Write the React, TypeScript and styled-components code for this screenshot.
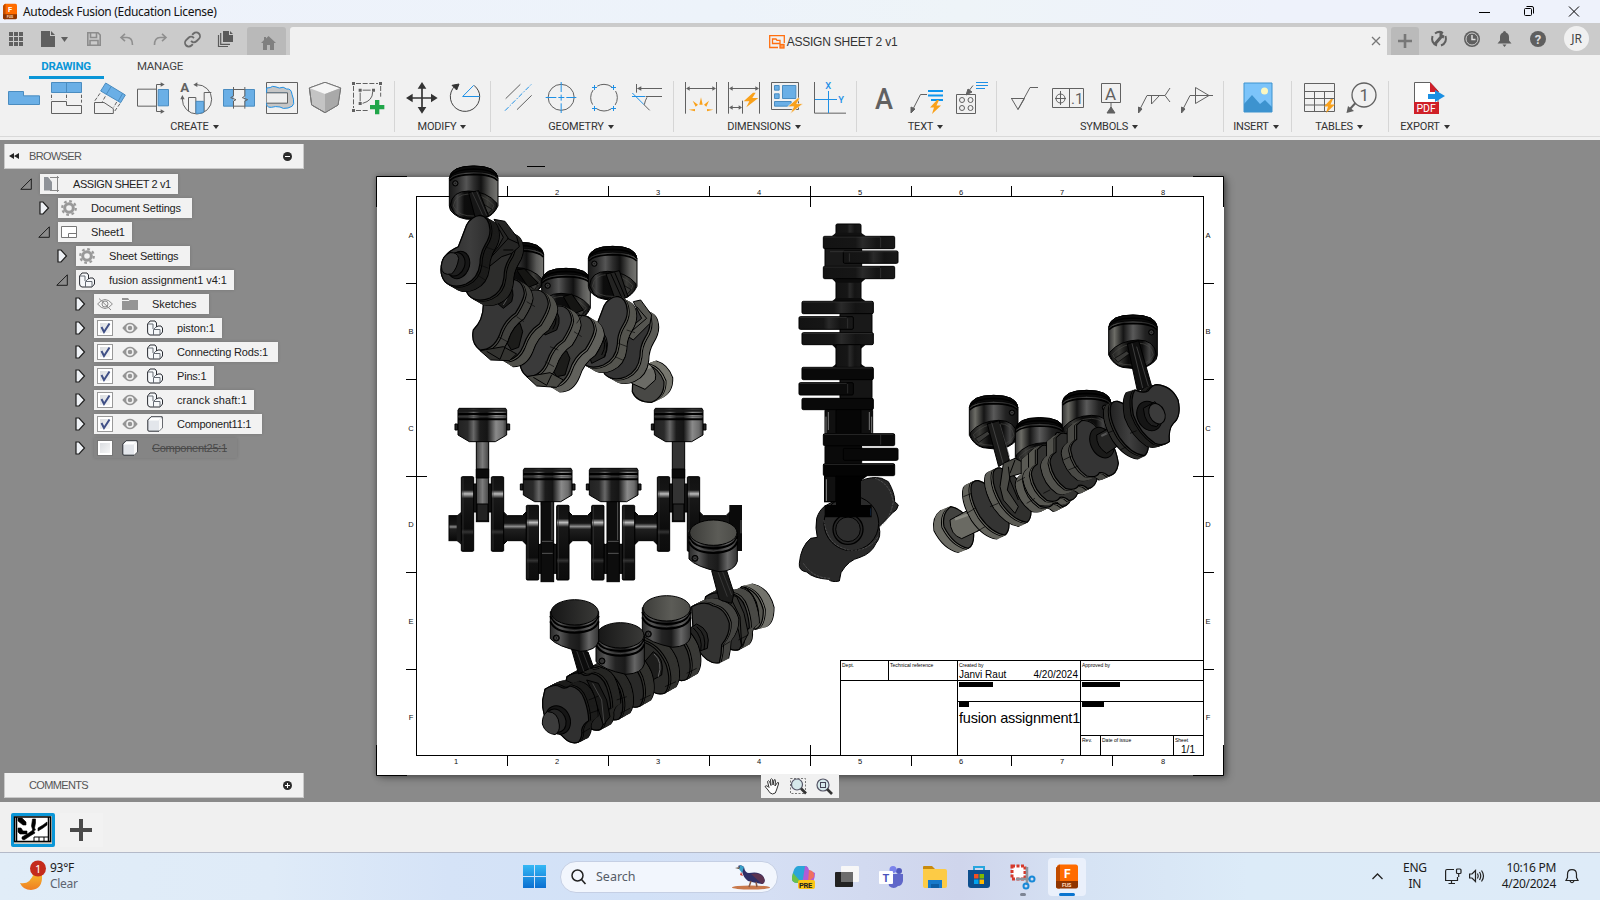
import React from "react";
import styled, { createGlobalStyle } from "styled-components";

const Global = createGlobalStyle`
  * { box-sizing: border-box; }
  html, body { margin: 0; padding: 0; }
  body { width: 1600px; height: 900px; overflow: hidden; font-family: "Liberation Sans", Arial, sans-serif; }
  svg { display: block; flex: none; overflow: visible; }
`;

const Screen = styled.div`
  width: 1600px;
  height: 900px;
  display: flex;
  flex-direction: column;
  background: #f0f0f0;
`;

/* ---------- window title bar ---------- */
const TitleBar = styled.header`
  height: 23px;
  flex: none;
  display: flex;
  align-items: center;
  padding-left: 3px;
  background: linear-gradient(90deg, #eef2fb 0%, #edf3fa 45%, #eef4f8 60%, #eef2fb 80%);
`;
const WindowTitle = styled.span`
  flex: 1;
  margin-left: 6px;
  font: 12px "Noto Sans", "Open Sans", sans-serif;
  letter-spacing: -0.32px;
  color: #111;
`;
const WindowButtons = styled.div`
  display: flex;
  padding-right: 4px;
  svg { width: 45px; height: 22px; }
`;

/* ---------- document tabs ---------- */
const TabBar = styled.nav`
  height: 32px;
  flex: none;
  display: flex;
  align-items: flex-end;
  background: #cbcbcb;
`;
const QuickCell = styled.div<{ $w?: number; $shift?: boolean }>`
  width: ${(p) => p.$w ?? 33}px;
  height: 32px;
  display: flex;
  align-items: center;
  justify-content: center;
  gap: 6px;
  padding-right: ${(p) => (p.$shift ? 2 : 0)}px;
`;
const HomeTab = styled.div`
  width: 39px;
  height: 28px;
  margin: 0 4px 0 5px;
  display: flex;
  align-items: center;
  justify-content: center;
  padding: 4px 0 0 3px;
  border-radius: 3px 3px 0 0;
  background: #b9b9b9;
`;
const DocTab = styled.div`
  width: 1097px;
  height: 28px;
  display: flex;
  align-items: center;
  justify-content: center;
  position: relative;
  gap: 2px;
  padding: 1px 11px 0 0;
  border-radius: 3px 3px 0 0;
  background: #f1f1f1;
  font-size: 12px;
  letter-spacing: -0.22px;
  color: #333;
`;
const CloseTab = styled.div`
  position: absolute;
  right: 6px;
  top: 9px;
`;
const PlusTab = styled.div`
  width: 28px;
  height: 28px;
  margin: 0 4px;
  display: flex;
  align-items: center;
  justify-content: center;
  border-radius: 3px 3px 0 0;
  background: #bababa;
`;
const Avatar = styled.div`
  width: 25px;
  height: 25px;
  margin: 0 0 4px 9px;
  border-radius: 50%;
  background: #f0f0f0;
  color: #444;
  font: 12px/25px "Noto Sans", sans-serif;
  text-align: center;
`;

/* ---------- ribbon ---------- */
const Ribbon = styled.section`
  height: 85px;
  flex: none;
  background: #f1f1f1;
  border-bottom: 3px solid #f1f1f1;
  display: flex;
  flex-direction: column;
  box-shadow: inset 0 -1px 0 #d9d9d9;
`;
const RibbonTabs = styled.div`
  display: flex;
  height: 24px;
  gap: 19px;
  padding-left: 29px;
`;
const RibbonTab = styled.div<{ $active?: boolean }>`
  width: 75px;
  height: 24px;
  padding-right: 1px;
  text-align: center;
  font: ${(p) => (p.$active ? 700 : 400)} 11.5px/22px Roboto, sans-serif;
  letter-spacing: -0.3px;
  color: ${(p) => (p.$active ? "#0a96d7" : "#444")};
  border-bottom: ${(p) => (p.$active ? "3px solid #0a96d7" : "0")};
`;
const Groups = styled.div`
  display: flex;
  padding-top: 2px;
`;
const Group = styled.div<{ $w: number; $nudge?: number }>`
  width: ${(p) => p.$w}px;
  height: 51px;
  padding: 1px 0 0 0;
  display: flex;
  flex-direction: column;
  align-items: center;
  border-right: 1px solid #d6d6d6;
  &:last-child { border-right: 0; }
  ${(p) => (p.$nudge && p.$nudge > 0 ? `padding-left: ${p.$nudge * 2}px;` : "")}
  ${(p) => (p.$nudge && p.$nudge < 0 ? `padding-right: ${-p.$nudge * 2}px;` : "")}
`;
const Tools = styled.div`
  display: flex;
  gap: 11px;
`;
const GroupLabel = styled.div`
  display: flex;
  align-items: center;
  gap: 4px;
  height: 14px;
  margin-top: 6px;
  padding-right: 3px;
  font: 11px/14px Roboto, sans-serif;
  letter-spacing: -0.2px;
  color: #333;
  &::after {
    content: "";
    border: 3px solid transparent;
    border-top: 4px solid #333;
    border-bottom: 0;
  }
`;

/* ---------- work area ---------- */
const Workspace = styled.main`
  position: relative;
  height: 662px;
  flex: none;
  background: #8a8a8a;
`;
const SideColumn = styled.aside`
  width: 308px;
  height: 662px;
  padding: 4px;
  display: flex;
  flex-direction: column;
`;
const PanelHeader = styled.div`
  height: 25px;
  flex: none;
  display: flex;
  align-items: center;
  justify-content: space-between;
  padding: 0 11px 0 4px;
  background: #f2f2f2;
  border: 1px solid #c9c9c9;
  border-width: 0 1px 1px 1px;
  font-size: 11px;
  letter-spacing: -0.65px;
  color: #555;
`;
const PanelTitle = styled.div`
  display: flex;
  align-items: center;
  gap: 10px;
`;
const Blank = styled.i`
  width: 10px;
`;
const Tree = styled.div`
  flex: 1;
  display: flex;
  flex-direction: column;
  gap: 4px;
  padding-top: 5px;
`;
const TreeRow = styled.div<{ $x: number }>`
  display: flex;
  height: 20px;
  padding-left: ${(p) => p.$x - 24}px;
`;
const ArrowCell = styled.div<{ $open?: boolean }>`
  width: 20px;
  display: flex;
  align-items: center;
  padding-left: ${(p) => (p.$open ? 0 : 1)}px;
`;
const TreeBox = styled.div<{ $w: number; $off?: boolean }>`
  width: ${(p) => p.$w}px;
  height: 20px;
  display: flex;
  align-items: center;
  gap: 9px;
  padding-left: 3px;
  background: ${(p) => (p.$off ? "#858585" : "#f2f2f2")};
  box-shadow: 0 0 3px rgba(0, 0, 0, 0.15);
`;
const TreeText = styled.span<{ $ls: number; $off?: boolean }>`
  margin-left: 5px;
  font-size: 11px;
  white-space: nowrap;
  letter-spacing: ${(p) => p.$ls}px;
  color: ${(p) => (p.$off ? "#4a4a4a" : "#222")};
  text-decoration: ${(p) => (p.$off ? "line-through" : "none")};
`;
const Check = styled.div<{ $off?: boolean }>`
  width: 16px;
  height: 16px;
  border: 1px solid ${(p) => (p.$off ? "#777" : "#999")};
  background: linear-gradient(135deg, #d5d8dc, #fbfbfb);
  box-shadow: inset 0 0 0 2px #fff;
`;
const Sheet = styled.div`
  position: absolute;
  left: 377px;
  top: 37px;
  width: 847px;
  height: 598px;
  background: #fff;
  box-shadow: 0 0 5px 1px rgba(0, 0, 0, 0.3), 3px 3px 8px rgba(0, 0, 0, 0.3);
`;
const Drawing = styled.svg`
  position: absolute;
  left: 370px;
  top: 0;
`;
const TitleBlock = styled.div`
  position: absolute;
  left: 840px;
  top: 520px;
  width: 364px;
  height: 96px;
  display: grid;
  grid-template-columns: 117px 123px 122px;
  border: 1px solid #000;
  background: #fff;
  color: #000;
`;
const BlockColumn = styled.div`
  display: flex;
  flex-direction: column;
  min-width: 0;
  border-right: 1px solid #000;
  &:last-child { border-right: 0; }
`;
const BlockRow = styled.div<{ $h: number }>`
  display: flex;
  height: ${(p) => p.$h}px;
  border-bottom: 1px solid #000;
  &:last-child { border-bottom: 0; }
`;
const Cell = styled.div<{ $w?: number }>`
  ${(p) => (p.$w ? `width: ${p.$w}px;` : "flex: 1;")}
  padding: 1px 2px 0 1px;
  border-right: 1px solid #000;
  white-space: nowrap;
  &:last-child { border-right: 0; }
`;
const Tiny = styled.div`
  font-size: 5px;
  line-height: 7px;
  height: 7px;
`;
const Signature = styled.div<{ $center?: boolean }>`
  display: flex;
  justify-content: ${(p) => (p.$center ? "center" : "space-between")};
  font-size: 10px;
  line-height: 12px;
`;
const Redacted = styled.div<{ $w: number; $up?: boolean }>`
  width: ${(p) => p.$w}px;
  height: 5px;
  margin-top: ${(p) => (p.$up ? -1 : 0)}px;
  background: #000;
`;
const PartName = styled.div`
  margin-top: 2px;
  font-size: 14.5px;
  line-height: 18px;
  letter-spacing: -0.22px;
`;
const NavTools = styled.div`
  position: absolute;
  left: 761px;
  top: 634px;
  width: 78px;
  height: 24px;
  display: flex;
  align-items: center;
  gap: 9px;
  padding-left: 3px;
  background: #f1f1f1;
`;

/* ---------- sheet strip ---------- */
const SheetStrip = styled.div`
  height: 50px;
  flex: none;
  display: flex;
  align-items: center;
  gap: 5px;
  padding: 7px 0 1px 11px;
  background: #f0f0f0;
`;
const Thumb = styled.div`
  width: 44px;
  height: 34px;
  border: 3px solid #0a96d7;
  border-radius: 2px;
  background: #c8ccc6;
`;
const AddSheet = styled.div`
  width: 43px;
  height: 34px;
  display: flex;
  align-items: center;
  justify-content: center;
  padding-right: 1px;
  background: #f2f2f2;
`;

/* ---------- taskbar ---------- */
const Taskbar = styled.footer`
  height: 48px;
  flex: none;
  display: flex;
  align-items: center;
  border-top: 1px solid #b4bac9;
  background: linear-gradient(90deg, #e1edf8 0%, #dfebf8 17%, #d5e3f7 28%, #d2e1f7 40%, #d5dff4 48%, #cfd5ec 60%, #d6e3f4 68%, #dcebf8 78%, #deebf8 100%);
  font: 12px "Noto Sans", "Open Sans", sans-serif;
  letter-spacing: -0.3px;
  color: #1b1b1b;
`;
const Weather = styled.div`
  width: 523px;
  padding: 0 0 2px 20px;
  display: flex;
  gap: 4px;
  align-items: center;
`;
const Lines = styled.div<{ $align?: string }>`
  line-height: 16px;
  text-align: ${(p) => p.$align ?? "left"};
  white-space: nowrap;
`;
const Muted = styled.div`
  color: #5c6470;
`;
const SearchBox = styled.div`
  width: 218px;
  height: 32px;
  margin: 0 6px 0 14px;
  padding: 0 6px 0 10px;
  display: flex;
  align-items: center;
  gap: 10px;
  border-radius: 16px;
  background: #f2f6fd;
  border: 1px solid #c5cfe4;
  color: #555b66;
  font-size: 12.5px;
  letter-spacing: 0;
`;
const SearchText = styled.span`
  flex: 1;
`;
const AppSlot = styled.div<{ $active?: boolean; $dot?: boolean }>`
  position: relative;
  width: 38px;
  height: 38px;
  margin-right: 6px;
  display: flex;
  align-items: center;
  justify-content: center;
  border-radius: 4px;
  background: ${(p) => (p.$active ? "#eaf0fb" : "transparent")};
  &::after {
    content: "";
    position: absolute;
    bottom: 0;
    width: ${(p) => (p.$active ? 16 : p.$dot ? 6 : 0)}px;
    height: 3px;
    border-radius: 2px;
    background: ${(p) => (p.$active ? "#0a74cf" : "#7c8494")};
  }
`;
const Tray = styled.div`
  margin-left: auto;
  display: flex;
  align-items: center;
  padding: 0 21px 1px 0;
`;
const TraySlot = styled.div<{ $ml: number }>`
  margin-left: ${(p) => p.$ml}px;
`;

/* ---------- icons ---------- */
const BLUE = "#6aafe6";
const EDGE = "#4a8cc0";
const GR = "#616161";
const HI = "#1e90e6";
const ORANGE = "#f9a11b";

const Tool = ({ vb = "0 0 32 32", children }: { vb?: string; children: React.ReactNode }) => (
  <svg width="32" height="32" viewBox={vb} fill="none" stroke={GR} strokeWidth={vb.endsWith("96 96") ? 3 : 1}>
    {children}
  </svg>
);

const createTools = (
  <>
    <Tool vb="24 246 96 96"><path d="M25.5 274.500H70.500V287.500H118.500V313.500H25.500Z" fill={BLUE} stroke={EDGE} /></Tool>
    <Tool vb="153 246 96 96">
      <path d="M154.500 247.500H244.500V277.500H154.500ZM199.500 247V278" fill={BLUE} stroke={EDGE} />
      <path d="M154.500 284V300M199.500 284V300M244.500 284V308" strokeDasharray="10 5" />
      <path d="M154.500 304.500H199.500V316.500H244.500V340.500H154.500Z" />
    </Tool>
    <Tool vb="282 246 96 96">
      <path d="M317 249L376 285L362 308L302 273Z" fill={BLUE} stroke={EDGE} />
      <path d="M333 260L319 283M368 280L355 303" stroke={EDGE} />
      <path d="M300 280L284 303M316 289L307 305M360 311L343 335M350 306L341 322" strokeDasharray="11 5" />
      <path d="M283.500 340.500V307.500H312L340 326V340.500Z" />
    </Tool>
    <Tool vb="411 246 96 96">
      <path d="M412.500 267.500H468M412.500 267.500V318.500H468" /><path d="M474.500 268.500H505.500V317.500H474.500Z" fill={BLUE} stroke={EDGE} />
      <path d="M484 253.500H469.500V334.500H484" /><path d="M482 247L494 253.500L482 260ZM482 328L494 334.500L482 341Z" fill={GR} stroke="none" />
    </Tool>
    <Tool vb="540 246 96 96">
      <text x="541" y="276" fontSize="40" fontWeight="700" fontFamily="Roboto" fill={GR} stroke="none">A</text>
      <path d="M590 254A44 44 0 1 1 547 297" /><path d="M580 254L592 247V261ZM541 298L547 285L554 298Z" fill={GR} stroke="none" />
      <path d="M565.500 334V292.500H587.500V340M612.500 334V277.500H634" /><path d="M588 304H611V336Q600 342 588 340Z" fill={BLUE} stroke={EDGE} />
    </Tool>
    <Tool vb="669 246 96 96">
      <path d="M670.500 268.500H700V318.500H670.500ZM734 268.500H763.500V318.500H734Z" fill={BLUE} stroke={EDGE} />
      <path d="M700 268H734V319H700Z" fill="#f1f1f1" stroke="none" />
      <path d="M700 268.500H734M700 318.500H734M700.500 261V288L692 293L708 299L700.500 303V326M734.500 261V288L727 293L743 299L734.500 303V326" />
    </Tool>
    <Tool vb="798 246 96 96">
      <path d="M799.500 247.500H892.500V340.500H799.500Z" />
      <path d="M800 264Q812 264 818 259Q828 260 838 264Q850 258 860 267Q874 265 876 283Q882 298 881 311Q880 320 864 324Q848 328 840 321Q826 318 814 322Q806 324 800 316V308H862V279H800Z" fill="#c6c6c6" stroke={HI} />
      <path d="M800 278.500H862.500V309.500H800" fill="#eee" />
    </Tool>
    <Tool vb="927 246 96 96">
      <path d="M975 247L1022 264L1014 315L975 338L935 315L928 264Z" fill="#c4c4c4" />
      <path d="M975 247L1022 264L975 282L928 264Z" fill="#f5f5f5" stroke="none" />
      <path d="M975 282V338L1014 315L1022 264Z" fill="#a9a9a9" stroke="none" />
      <path d="M975 247L1022 264L1014 315L975 338L935 315L928 264Z" stroke="#777" />
    </Tool>
    <Tool vb="1056 246 96 96">
      <path d="M1068 250.500H1134M1060.500 258V324M1142 258V290M1068 331.500H1104" strokeDasharray="15 5" />
      <path d="M1080.500 278V304M1088 270.500H1112M1118 276Q1118 302 1088 310" />
      <path d="M1056 246h9v9h-9zM1137 246h9v9h-9zM1056 327h9v9h-9zM1076 266h9v9h-9zM1116 266h9v9h-9zM1076 306h9v9h-9z" fill={GR} stroke="none" />
      <path d="M1131.500 300V343M1110 321.500H1153" stroke="#21a64a" strokeWidth="13" />
    </Tool>
  </>
);

const modifyTools = (
  <>
    <Tool vb="18 66 96 96">
      <path d="M66 80V148M32 114H100" stroke="#333" strokeWidth="5" />
      <path d="M66 66L79 86H53ZM66 161L79 141H53ZM18 114L38 101V127ZM113 114L93 101V127Z" fill="#333" stroke="none" />
    </Tool>
    <Tool vb="147 66 96 96">
      <path d="M239 110A44 44 0 1 1 165 78M222 76Q240 92 239 110" stroke="#444" /><path d="M156 76L177 72L170 90Z" fill="#333" stroke="#333" />
      <path d="M238 109.500H188L221 76" stroke={HI} />
    </Tool>
  </>
);
const geometryTools = (
  <>
    <Tool vb="307 66 96 96">
      <path d="M318 116L362 73M352 149L396 106" /><path d="M316 152L396 72" stroke={HI} strokeDasharray="15 5 4 5" />
    </Tool>
    <Tool vb="436 66 96 96">
      <circle cx="484.500" cy="112" r="39" /><path d="M484.500 66V96M484.500 104V122M484.500 130V159M438 112.500H470M476 112.500H494M500 112.500H530" stroke={HI} />
    </Tool>
    <Tool vb="567 66 96 96">
      <circle cx="615" cy="113" r="40" strokeDasharray="46 17" strokeDashoffset="23" />
      <path d="M579 82.500H594M586.500 75V90M636 82.500H651M643.500 75V90M579 145.500H594M586.500 138V153M636 145.500H651M643.500 138V153" stroke={HI} />
    </Tool>
    <Tool vb="696 66 96 96">
      <path d="M712.500 72V98M716 85.500H789M740 109.500H789M734 133L752 151M744 112Q738 122 736 134" /><path d="M714 85.500L727 79V92Z" fill={GR} stroke="none" />
      <path d="M699 109.500H738M700 99L734 133" stroke={HI} />
    </Tool>
  </>
);
const dimensionTools = (
  <>
    <Tool vb="858 66 96 96">
      <path d="M859.500 66V161M952.500 66V161M864 85.500H948" /><path d="M861 85.500L872 79V92ZM951 85.500L940 79V92Z" fill={GR} stroke="none" />
      <path d="M906 112L911 134H901ZM881 122L897 134L890 140ZM930 122L915 134L922 140ZM869 149L888 147L888 154ZM943 149L924 147V154Z" fill={ORANGE} stroke="none" />
    </Tool>
    <Tool vb="987 66 96 96">
      <path d="M988.500 66V161M1081.500 66V161M993 85.500H1077M1030.500 122V161M993 142.500H1026" />
      <path d="M990 85.500L1001 79V92ZM1080 85.500L1069 79V92ZM990 142.500L1001 136V149ZM1029 142.500L1019 136V149Z" fill={GR} stroke="none" />
      <path d="M1062 98L1034 124H1051L1042 142L1078 114H1060L1070 98Z" fill={ORANGE} stroke="none" />
    </Tool>
    <Tool vb="1116 66 96 96">
      <path d="M1117.500 67.500H1198.500V148.500H1117.500Z" /><path d="M1126.500 76.500h14v14h-14zM1126.500 101.500h14v14h-14zM1150.500 76.500h40v39h-40zM1126.500 124.500h50v14h-50z" fill={BLUE} stroke={EDGE} />
      <path d="M1196 114L1166 140H1184L1174 161L1212 131H1193L1203 114Z" fill={ORANGE} stroke="#f1f1f1" strokeWidth="2" />
    </Tool>
    <Tool vb="1245 66 96 96">
      <path d="M1246.500 66V159.500H1341" /><path d="M1248 118.500H1314M1288.500 93V159" stroke={HI} />
      <text x="1279" y="87" fontSize="28" fontWeight="500" fontFamily="Roboto" fill={HI} stroke="none">X</text>
      <text x="1318" y="129" fontSize="28" fontWeight="500" fontFamily="Roboto" fill={HI} stroke="none">Y</text>
    </Tool>
  </>
);
const bolt = (x: number, y: number) => (
  <path transform={`translate(${x} ${y})`} d="M7 0L0 7.500H4L2 14L11 5.500H6.500L9 0Z" fill={ORANGE} stroke="none" />
);
const textTools = (
  <>
    <Tool><text x="7" y="27" fontSize="29" fontFamily="Roboto" fontWeight="500" fill={GR} stroke="none" textLength="18" lengthAdjust="spacingAndGlyphs">A</text></Tool>
    <Tool><path d="M16 12.500H9.500L1 29" /><path d="M0 31V25L4 27Z" fill={GR} /><path d="M17 9H32M17 13.500H32M20 18H32" stroke="#0f96ee" strokeWidth="2" />{bolt(19, 18)}</Tool>
    <Tool>
      <path d="M2.500 12.500H21.500V31.500H2.500ZM19 3.500L14 10" /><circle cx="8" cy="18" r="2.500" /><circle cx="16.500" cy="18" r="2.500" /><circle cx="8" cy="26" r="2.500" /><circle cx="16.500" cy="26" r="2.500" />
      <path d="M12 13L14 7L18 10Z" fill={GR} /><path d="M22 0.500H34M22 3.500H34M22 6.500H31" stroke={HI} />
    </Tool>
  </>
);
const symbolTools = (
  <>
    <Tool><path d="M2 16.500H15.500L9 27.500L2.500 16.500M9 27.500L21 5.500H29" /></Tool>
    <Tool><path d="M0.500 6.500H31.500V25.500H0.500ZM17.500 6V26M8.500 9V23M3 16.500H14" /><circle cx="8.500" cy="16.500" r="4.500" /><text x="19" y="22" fontSize="15" fontFamily="Roboto" fill={GR} stroke="none">.1</text></Tool>
    <Tool><path d="M6.500 1.500H25.500V20.500H6.500ZM16 21V28" /><path d="M12 31L16 25L20 31Z" fill={GR} /><text x="10" y="17.500" fontSize="17" fontFamily="Roboto" fill={GR} stroke="none">A</text></Tool>
    <Tool><path d="M1 29L9 13.500H27L32 6M27 13.500L32 20M13.500 14V22L21 14" /><path d="M0.500 31V25L4 27Z" fill={GR} /></Tool>
    <Tool><path d="M1 29L9 13.500H32M14.500 5.500V21.500L28 13.500Z" /><path d="M0.500 31V25L4 27Z" fill={GR} /></Tool>
  </>
);
const insertTools = (
  <Tool>
    <path d="M2 1H30V30H2Z" fill="#7cc4fa" stroke="#3d93cf" /><path d="M2 22L10 13L18 22L23 18L30 25V30H2Z" fill="#3d93cf" stroke="none" /><circle cx="22.500" cy="9" r="3.500" fill="#fbf7c0" stroke="none" />
  </Tool>
);
const tableTools = (
  <>
    <Tool><path d="M1.500 1.500H31.500V29.500H1.500ZM1.500 9.500H31.500M1.500 16.500H31.500M1.500 23H24M11.500 9.500V29.500M21.500 9.500V29.500" />{bolt(21, 17)}</Tool>
    <Tool><circle cx="18" cy="13" r="12" strokeWidth="1.300" /><path d="M9.500 21L3 28" strokeWidth="2" /><path d="M0.500 31L2 24L8 29Z" fill={GR} stroke="none" /><text x="13.500" y="19" fontSize="17" fontFamily="Roboto" fill={GR} stroke="none">1</text></Tool>
  </>
);
const exportTools = (
  <Tool>
    <path d="M3.500 20V0.500H19L27 9V20" fill="#fff" /><path d="M19 0L28 10H19Z" fill="#d0202a" stroke="none" />
    <path d="M17 12H24V8L34 14L24 20V17H17Z" fill="#1a8fe3" stroke="none" /><path d="M3 20H28V32H3Z" fill="#cf2027" stroke="none" />
    <text x="5.500" y="30" fontSize="10.500" fontFamily="Roboto" fill="#fff" stroke="none">PDF</text>
  </Tool>
);

const ribbonGroups: [string, number, React.ReactNode, number][] = [
  ["CREATE", 395, createTools, -1],
  ["MODIFY", 96, modifyTools, 1],
  ["GEOMETRY", 183, geometryTools, 0.5],
  ["DIMENSIONS", 183, dimensionTools, 0.5],
  ["TEXT", 140, textTools, 0.5],
  ["SYMBOLS", 227, symbolTools, 0.5],
  ["INSERT", 68, insertTools, 0],
  ["TABLES", 97, tableTools, 0.5],
  ["EXPORT", 77, exportTools, -1],
];

/* ---------- browser tree ---------- */
const OpenArrow = () => (
  <svg width="12" height="12" viewBox="0 0 12 12"><path d="M11.300 0.800V11.300H0.800Z" fill="#8c8c8c" stroke="#1c1c1c" /></svg>
);
const ClosedArrow = () => (
  <svg width="11" height="14" viewBox="0 0 11 14"><path d="M1 1H4L9.500 7L4 13H1Z" fill="#eef1f5" stroke="#1c1c1c" strokeWidth="1.200" /></svg>
);
const Gear = () => (
  <svg width="16" height="16" viewBox="0 0 16 16"><circle cx="8" cy="8" r="4.300" fill="none" stroke="#999" strokeWidth="3" /><circle cx="8" cy="8" r="6.800" fill="none" stroke="#999" strokeWidth="2.200" strokeDasharray="2.700 2.640" /></svg>
);
const Parts = () => (
  <svg width="16" height="16" viewBox="0 0 16 16"><path d="M0.600 4L3 1H8L9.500 3V7L11 6H14L15.500 8V12L13 15H3Q0.600 14.500 0.600 12Z" fill="#f6f8fa" stroke="#2a2d33" /><path d="M6.500 9.500V15M6.500 9.500H13V15M7 9L9 7M1 4H6V9" fill="none" stroke="#666c75" /></svg>
);
const Cube = () => (
  <svg width="16" height="16" viewBox="0 0 16 16"><path d="M0.800 4L4 0.800H15.200V12L12 15.200H2Q0.800 15.200 0.800 14Z" fill="#e3e6eb" stroke="#2a2d33" /><path d="M1.500 4.500L4.300 1.500H14.500L11.500 4.500Z" fill="#fff" /><path d="M12 4.500L15 2V12L12 15Z" fill="#f9f9f9" /></svg>
);
const Eye = ({ hidden }: { hidden?: boolean }) =>
  hidden ? (
    <svg width="16" height="16" viewBox="0 0 16 16" fill="none" stroke="#8c8c8c"><path d="M0.600 8Q8 -1 15.400 8Q8 17 0.600 8Z" /><circle cx="8" cy="8" r="3" /><path d="M2 2.500L14 14" /></svg>
  ) : (
    <svg width="16" height="16" viewBox="0 0 16 16"><path d="M0.300 8Q8 -2.500 15.700 8Q8 18.500 0.300 8Z" fill="#959595" /><circle cx="8" cy="8" r="3" fill="#959595" stroke="#f2f2f2" strokeWidth="1.500" /></svg>
  );
const Folder = () => (
  <svg width="16" height="14" viewBox="0 0 16 14"><path d="M0 1H6L7.500 3H16V13H0Z" fill="#949494" /><path d="M0 3.500H7L8 2" stroke="#f2f2f2" fill="none" /></svg>
);
const SheetIcon = () => (
  <svg width="16" height="12" viewBox="0 0 16 12" fill="#fff" stroke="#777"><path d="M0.500 0.500H15.500V11.500H0.500ZM7.500 11V7.500H15" /></svg>
);
const DocIcon = () => (
  <svg width="16" height="16" viewBox="0 0 16 16"><path d="M1 1H5L9 6V14.500H1Z" fill="#8f9399" /><path d="M7 1.500H16M14.500 0V16M7 14.500H16" stroke="#888" fill="none" /></svg>
);
const Ticked = () => (
  <Check><svg width="14" height="14" viewBox="0 0 14 14"><path d="M3.500 6L6 11L11.500 2.500" fill="none" stroke="#3f4f86" strokeWidth="2" /></svg></Check>
);

type Row = { x: number; w: number; open?: boolean; icons: React.ReactNode; text: string; ls: number; off?: boolean };
const comp = (c: React.ReactNode) => (<><Ticked /><Eye />{c}</>);
const rows: Row[] = [
  { x: 40, w: 138, open: true, icons: <DocIcon />, text: "ASSIGN SHEET 2 v1", ls: -0.43 },
  { x: 58, w: 134, icons: <Gear />, text: "Document Settings", ls: -0.18 },
  { x: 58, w: 74, open: true, icons: <SheetIcon />, text: "Sheet1", ls: -0.2 },
  { x: 76, w: 114, icons: <Gear />, text: "Sheet Settings", ls: -0.15 },
  { x: 76, w: 158, open: true, icons: <Parts />, text: "fusion assignment1 v4:1", ls: -0.03 },
  { x: 94, w: 115, icons: <><Eye hidden /><Folder /></>, text: "Sketches", ls: -0.1 },
  { x: 94, w: 128, icons: comp(<Parts />), text: "piston:1", ls: -0.1 },
  { x: 94, w: 184, icons: comp(<Parts />), text: "Connecting Rods:1", ls: -0.15 },
  { x: 94, w: 120, icons: comp(<Parts />), text: "Pins:1", ls: -0.2 },
  { x: 94, w: 160, icons: comp(<Parts />), text: "cranck shaft:1", ls: 0.1 },
  { x: 94, w: 168, icons: comp(<Cube />), text: "Component11:1", ls: -0.25 },
  { x: 94, w: 143, icons: <><Check $off /><Cube /></>, text: "Component25:1", ls: -0.25, off: true },
];

/* ---------- engine drawing ---------- */
const Extrude = ({ d, dx, dy, face, side, at = [0, 0] }: { d: string; dx: number; dy: number; face: string; side: string; at?: number[] }) => {
  const n = Math.ceil(Math.max(Math.abs(dx), Math.abs(dy)) / 3);
  return (
    <g transform={`translate(${at[0]} ${at[1]})`} strokeWidth="3.500">
      <path d={d} transform={`translate(${dx} ${dy})`} fill={side} stroke="#000" />
      {Array.from({ length: n }, (_, i) => (
        <path key={i} d={d} transform={`translate(${(dx * (n - i - 1)) / n} ${(dy * (n - i - 1)) / n})`} fill={side} stroke={i === n - 3 ? "#000" : side} />
      ))}
      <path d={d} fill={face} stroke="#000" />
    </g>
  );
};

const PistonUnder = ({ x, y, flip }: { x: number; y: number; flip?: boolean }) => (
  <g transform={flip ? `translate(${x + 146} ${y}) scale(-1 1)` : `translate(${x} ${y})`} stroke="#000" strokeWidth="3" fill="none">
    <path d="M0 37Q4 0 73 0Q142 0 146 37V120Q132 150 105 157Q40 168 14 144Q0 134 0 120Z" fill={flip ? "url(#shellFlip)" : "url(#shell)"} />
    <path d="M0 37Q4 0 73 0Q142 0 146 37Q130 18 73 18Q16 18 0 37Z" fill="#0b0b0b" />
    <path d="M1 44Q16 26 73 25Q130 26 145 44M2 30Q20 10 73 9Q126 10 144 30" stroke="#000" strokeWidth="5" />
    <path d="M3 38Q18 20 73 20Q128 20 143 38" stroke="#333" strokeWidth="2" />
    <path d="M3 118Q8 75 58 75Q112 76 143 112V120Q132 148 105 155Q40 166 16 142Z" fill="url(#bore)" />
    <path d="M12 120Q18 86 58 84Q104 86 134 118Q124 142 102 148Q44 156 24 136Z" stroke="#4a4a47" strokeWidth="2" />
    <path d="M84 116L92 108L128 130L118 142Z" fill="#3a3a38" strokeWidth="2" />
    <circle cx="18" cy="52" r="8" fill="#1c1c1c" /><circle cx="18" cy="52" r="4" stroke="#555" strokeWidth="2" />
  </g>
);
const PistonFront = ({ x, y }: { x: number; y: number }) => (
  <g transform={`translate(${x} ${y})`} stroke="#000" strokeWidth="3">
    <path d="M-9 47h8v18h-8zM146 47h9v18h-9z" fill="#222" />
    <path d="M3 0H143L146 6V80L112 100H34L0 80V6Z" fill="url(#steel)" />
    <path d="M0 17H146M0 33H146" strokeWidth="6" /><path d="M0 25H146" stroke="#444" strokeWidth="2" />
    <path d="M2 3H144V10H2Z" fill="#1a1a1a" stroke="none" />
  </g>
);
const PistonTop = ({ x, y, light }: { x: number; y: number; light?: boolean }) => (
  <g transform={`translate(${x} ${y})`} stroke="#000" strokeWidth="3" fill="none">
    <path d="M0 37V118Q22 142 90 156Q138 154 145 125V37Z" fill="url(#skirt)" />
    <path d="M0 50Q10 84 73 86Q136 84 145 50M0 66Q12 98 73 100Q134 98 145 66" strokeWidth="6" />
    <path d="M2 60Q14 92 73 94Q132 90 144 58" stroke="#555" strokeWidth="2" />
    <ellipse cx="73" cy="39" rx="71" ry="38" fill={light ? "url(#crownL)" : "url(#crownD)"} />
    <circle cx="18" cy="116" r="9" fill="#1b1b1b" /><circle cx="18" cy="116" r="4" stroke="#555" strokeWidth="2" />
  </g>
);

const lobeUp = "M330 196Q358 200 360 240Q360 262 345 285Q330 310 330 340Q325 385 288 402Q250 418 225 395Q205 370 218 330Q230 305 265 290Q275 265 290 225Q305 198 330 196Z";
const lobeDown = "M425 388Q458 388 463 430Q460 452 436 490Q402 512 388 556Q370 600 330 600Q302 580 310 540Q340 510 340 465Q344 430 372 404Q400 388 425 388Z";

const ViewUnder = () => (
  <g transform="translate(370 150) scale(.33333)" stroke="#000" strokeWidth="3">
    <PistonUnder x={375} y={277} /><PistonUnder x={515} y={355} /><PistonUnder x={655} y={289} />
    <path d="M440 360L463 356L505 400L475 412Z" fill="#151513" /><path d="M580 440L605 432L640 480L610 492Z" fill="#151513" />
    <path d="M708 372L748 362L774 440L738 455Z" fill="#232322" /><path d="M722 370L756 445M734 367L765 440" />
    <Extrude d="M833 640Q868 650 882 690Q884 735 845 752Q800 752 787 720Q785 680 808 650Z" dx={26} dy={-12} face="#484845" side="#77776f" at={[0, 5]} />
    <path d="M790 655L835 640Q862 660 856 690L825 718L785 700Z" fill="#6b6b66" /><path d="M812 660L842 650" stroke="#92928a" strokeWidth="9" />
    <Extrude d={lobeUp} dx={26} dy={14} face="#343434" side="#5c5c57" at={[480, 278]} />
    <path d="M790 455L812 450L845 495L840 520L790 570L775 560L785 530L815 505Z" fill="#555550" /><path d="M800 470L830 505L780 548" fill="none" />
    <Extrude d={lobeUp} dx={28} dy={16} face="#3b3b3b" side="#55554f" at={[412, 243]} />
    <path d="M640 560L690 545Q720 575 705 620L665 640Z" fill="#242423" /><path d="M690 555Q715 580 695 615M700 548Q724 580 702 622" fill="none" />
    <Extrude d={lobeDown} dx={30} dy={18} face="#3c3c3a" side="#62625d" at={[210, 108]} />
    <path d="M565 610L590 603L600 625L585 675L560 680L548 660Z" fill="#1c1c1a" />
    <Extrude d={lobeDown} dx={28} dy={16} face="#3a3a3a" side="#555550" at={[142, 80]} />
    <path d="M470 680L540 668L580 690L560 712L500 708Z" fill="#494944" /><path d="M490 682L530 706L545 674" fill="none" />
    <path d="M500 490L548 470Q580 500 560 540L525 555Z" fill="#1f1f1e" /><path d="M545 480Q570 505 548 538" fill="none" />
    <Extrude d={lobeDown} dx={28} dy={18} face="#373736" side="#50504b" at={[72, 32]} />
    <path d="M428 528L450 520L458 545L446 592L424 600L412 580Z" fill="#1c1c1a" />
    <Extrude d={lobeDown} dx={26} dy={16} face="#363636" side="#42423f" />
    <path d="M330 602L400 590L440 612L418 632L362 630Z" fill="#333330" /><path d="M350 604L390 628L404 594" fill="none" />
    <path d="M370 450L410 400Q438 415 425 455L400 475Z" fill="#181817" /><path d="M405 412Q425 430 400 465" fill="none" stroke="#555" />
    <PistonUnder x={238} y={48} />
    <path d="M296 128L326 122L356 198L318 212Z" fill="#161616" /><path d="M306 126L340 200M320 124L350 196" stroke="#444" strokeWidth="2" />
    <Extrude d={lobeUp} dx={28} dy={16} face="#2d2d2c" side="#262624" at={[72, 42]} />
    <path d="M372 208L405 214L440 260L448 290L425 310L395 320L360 348L352 330L385 290L400 262Z" fill="#252524" /><path d="M385 220L415 265L360 325M412 265L445 280M400 300L430 300" fill="none" />
    <Extrude d={lobeUp} dx={28} dy={16} face="url(#faceA)" side="#1c1c1b" />
    <ellipse cx="266" cy="345" rx="32" ry="42" fill="#161616" transform="rotate(20 266 345)" />
    <ellipse cx="256" cy="343" rx="28" ry="36" fill="#1f1f1f" transform="rotate(20 256 343)" />
    <path d="M240 308Q262 306 266 325Q262 355 245 372Q215 378 214 350Q216 318 240 308Z" fill="#3a3a3a" />
    <g stroke="#080808" strokeWidth="2" fill="none"><path d="M330 345L356 355M318 372L345 390M345 290L372 300M470 455L495 470M440 500L462 515M385 560L412 575M540 590L565 600M525 635L552 650M612 545L635 560M745 580L772 590M735 620L762 632M770 540L795 548M648 480L620 520" /></g>
  </g>
);

const Web = ({ x, y }: { x: number; y: number }) => (
  <g transform={`translate(${x} ${y})`}>
    <rect width="37" height="224" rx="3" fill="url(#web)" stroke="#000" strokeWidth="3" />
    <path d="M5 3V220" stroke="#3a3a3a" strokeWidth="2" />
  </g>
);
const Journal = ({ x, w }: { x: number; w: number }) => (
  <path d={`M${x} 335L${x + 12} 347H${x + w - 12}L${x + w} 335V434L${x + w - 12} 422H${x + 12}L${x} 434Z`} fill="url(#shaft)" stroke="#000" strokeWidth="3" />
);
const ViewFront = () => (
  <g transform="translate(430 400) scale(.33333)">
    <rect x="57" y="347" width="40" height="75" fill="url(#shaft)" stroke="#000" strokeWidth="3" />
    <path d="M80 347L94 335V434L80 422Z" fill="#181818" />
    <Journal x={220} w={69} /><Journal x={416} w={68} /><Journal x={614} w={68} /><Journal x={808} w={92} />
    <rect x="898" y="315" width="38" height="138" fill="#0a0a0a" /><path d="M933 360V400" stroke="#555" strokeWidth="3" />
    {[130, 718].map((x) => <rect key={x} x={x} y="252" width="54" height="84" fill="#151515" stroke="#000" strokeWidth="3" />)}
    {[326, 522].map((x) => <rect key={x} x={x} y="432" width="56" height="88" fill="#151515" stroke="#000" strokeWidth="3" />)}
    <Web x={94} y={230} /><Web x={184} y={230} /><Web x={289} y={316} /><Web x={380} y={316} />
    <Web x={485} y={316} /><Web x={577} y={316} /><Web x={682} y={230} /><Web x={772} y={230} />
    <g stroke="#000" strokeWidth="3">
      <rect x="139" y="122" width="37" height="243" fill="url(#rod)" /><rect x="727" y="122" width="37" height="243" fill="#333" />
      <rect x="333" y="300" width="38" height="245" fill="#0d0d0d" /><rect x="531" y="300" width="37" height="245" fill="#0d0d0d" />
      <path d="M139 207H176V234H139ZM727 207H764V234H727Z" fill="#0a0a0a" /><path d="M141 312H174V363H141ZM729 312H762V363H729Z" fill="#222" />
    </g>
    <path d="M329 316V432M376 316V432M526 316V432M573 316V432" stroke="#fff" strokeWidth="3" />
    <path d="M366 305V420M563 305V420M336 424H368M534 424H566M336 460H368M534 460H566" stroke="#555" strokeWidth="3" />
    <PistonFront x={84} y={25} /><PistonFront x={673} y={25} /><PistonFront x={280} y={205} /><PistonFront x={478} y={205} />
  </g>
);

const lobeIso = "M345 868Q372 850 390 860Q402 870 420 858Q452 864 464 900Q476 935 476 962Q458 972 455 990Q458 1010 446 1026Q425 1034 405 1016Q385 995 360 985Q335 940 338 900Z";
const disc = "M372 835Q425 845 452 905Q470 960 450 990Q420 1005 380 960Q345 900 350 850Q360 835 372 835Z";
const ViewTopIso = () => (
  <g transform="translate(430 400) scale(.33333)" stroke="#000" strokeWidth="3">
    <Extrude d="M935 560Q985 570 1000 630Q1000 680 975 688Q935 670 918 610Q920 570 935 560Z" dx={32} dy={-8} face="#55554f" side="#74746d" />
    <path d="M915 575L950 565Q990 600 985 655L950 670Z" fill="#4c4c48" /><path d="M935 572Q972 610 968 660M950 566Q986 604 984 654" fill="none" />
    <Extrude d={lobeIso} dx={30} dy={-16} face="#2e2e2d" side="#4a4a46" at={[482, -278]} />
    <path d="M890 580L920 590L942 640L955 700L935 740L925 690L905 640L880 610Z" fill="#333330" /><path d="M900 590L930 650L935 735" fill="none" />
    <path d="M845 512L888 506L912 580L905 610L868 600Z" fill="#1b1b1a" /><path d="M862 510L892 590M875 508L905 585" stroke="#444" strokeWidth="2" />
    <Extrude d="M785 620Q825 600 850 618Q885 625 898 670Q900 705 875 735Q875 760 868 788Q835 795 805 750L790 700Z" dx={28} dy={-14} face="#333332" side="#454542" />
    <path d="M755 700L800 672Q845 690 832 745L790 760Z" fill="#232322" /><path d="M800 680Q832 705 822 750M790 684Q820 712 812 754" fill="none" />
    <Extrude d={disc} dx={32} dy={-18} face="#2f2f2d" side="#3a3a37" at={[320, -152]} />
    <Extrude d={disc} dx={32} dy={-18} face="#2c2c2a" side="#333330" at={[256, -112]} />
    <path d="M640 790L670 755Q705 775 695 825L668 840Z" fill="#1d1d1c" /><path d="M672 762Q700 785 685 830" fill="none" stroke="#666" />
    <Extrude d={disc} dx={32} dy={-18} face="#292928" side="#31312e" at={[180, -72]} />
    <Extrude d={disc} dx={32} dy={-18} face="#252524" side="#292927" at={[118, -34]} />
    <PistonTop x={637} y={586} light />
    <PistonTop x={777} y={359} light />
    <Extrude d={lobeIso} dx={30} dy={-16} face="#222221" side="#262624" at={[66, -38]} />
    <path d="M470 840L505 850L530 900L540 950L520 975L505 930L490 880Z" fill="#191918" /><path d="M488 850L515 900L522 970" fill="none" stroke="#444" />
    <path d="M424 745L474 756L490 800L446 822Z" fill="#0c0c0c" /><path d="M440 752L462 815M458 754L478 806" stroke="#444" strokeWidth="2" />
    <PistonTop x={498} y={667} /><PistonTop x={361} y={598} />
    <Extrude d={lobeIso} dx={28} dy={-14} face="#303030" side="#1d1d1c" />
    <ellipse cx="384" cy="960" rx="36" ry="44" transform="rotate(-25 384 960)" fill="#151515" /><ellipse cx="378" cy="962" rx="29" ry="36" transform="rotate(-25 378 962)" fill="#252525" />
    <path d="M352 935Q385 935 388 975Q390 995 375 1004Q345 1000 337 972Q336 945 352 935Z" fill="#3c3c3c" />
    <path d="M476 900L506 888M478 940L508 930M455 1000L480 985M560 900L590 890M570 940L600 925M630 900L662 885M705 860L738 845M770 820L800 805M875 740L900 725M925 720L955 705" fill="none" strokeWidth="2" />
  </g>
);

const Bar = ({ x, y, w, h, f = "url(#plate)" }: { x: number; y: number; w: number; h: number; f?: string }) => (
  <rect x={x} y={y} width={w} height={h} rx="4" fill={f} stroke="#000" strokeWidth="3" />
);
const ViewPlan = () => (
  <g transform="translate(780 200) scale(.33333)">
    <path d="M243 842Q275 828 305 835L325 845Q345 880 344 905L355 915Q352 932 338 938Q318 960 297 980Q305 1010 288 1030Q275 1060 240 1072Q205 1080 183 1118L178 1143Q155 1148 145 1138Q100 1135 80 1116Q55 1112 58 1090Q62 1040 92 1015L112 1012Q105 985 110 955Q118 930 135 918L168 900Z" fill="#292929" stroke="#000" strokeWidth="3" />
    <circle cx="214" cy="970" r="82" fill="#2b2b2b" stroke="#000" strokeWidth="3" />
    <path d="M132 960Q140 1040 214 1052Q270 1050 294 1010M70 1090Q100 1135 150 1135M300 980Q330 960 340 905Q330 850 285 835" fill="none" stroke="#777" strokeWidth="1.500" strokeDasharray="8 3" />
    <circle cx="204" cy="988" r="45" fill="#262626" stroke="#000" strokeWidth="4" /><circle cx="204" cy="988" r="37" fill="#2d2d2d" stroke="#000" strokeWidth="3" />
    <Bar x={168} y={72} w={75} h={45} /><path d="M156 108L168 98H243L257 108Z" fill="#111" />
    <Bar x={135} y={142} w={110} h={60} f="#191919" /><Bar x={168} y={235} w={75} h={70} /><Bar x={180} y={340} w={96} h={60} f="#191919" />
    <path d="M156 236H257L243 248H168ZM156 304H257L243 294H168ZM156 434H257L243 446H168ZM156 502H257L243 492H168Z" fill="#0c0c0c" />
    <Bar x={168} y={433} w={75} h={70} /><Bar x={180} y={537} w={96} h={60} f="#151515" />
    <Bar x={135} y={628} w={143} h={74} f="#101010" /><path d="M138 650V700M275 650V700M145 636V690M268 636V690" stroke="#777" strokeWidth="3" />
    <Bar x={168} y={628} w={75} h={74} f="#060606" />
    <Bar x={135} y={737} w={110} h={55} f="#0a0a0a" />
    <rect x="133" y="828" width="35" height="77" fill="#101010" /><path d="M139 838V903" stroke="#777" strokeWidth="4" /><rect x="134" y="828" width="34" height="77" fill="none" stroke="#000" strokeWidth="4" />
    <path d="M134 826H265L243 842V915H275V952H134V915H168V826Z" fill="#010101" />
    <Bar x={130} y={109} w={214} h={37} /><Bar x={130} y={199} w={214} h={37} /><Bar x={66} y={304} w={214} h={37} /><Bar x={66} y={398} w={214} h={36} />
    <Bar x={66} y={502} w={214} h={37} f="#090909" /><Bar x={66} y={595} w={214} h={34} f="#090909" /><Bar x={130} y={701} w={214} h={36} f="#090909" /><Bar x={130} y={791} w={214} h={36} f="#040404" />
    <Bar x={190} y={153} w={164} h={37} /><Bar x={57} y={350} w={163} h={38} /><Bar x={57} y={548} w={163} h={37} f="#0b0b0b" /><Bar x={190} y={745} w={164} h={36} f="#080808" />
    <path d="M133 111H300M133 201H300M69 306H277M69 400H277M150 155H350M60 352H200M69 504H277M60 550H200M133 703H340M133 793H340M208 160V185M203 355V385M203 552V580M302 112V143M302 204V234M302 704V734" stroke="#3d3d3d" strokeWidth="2" />
    <path d="M272 925V947" stroke="#173458" strokeWidth="2" />
  </g>
);

const ring = "M235 542Q290 560 322 635Q335 690 315 705Q275 700 240 650Q205 590 215 552Q222 540 235 542Z";
const lobeRight = "M545 362Q570 358 590 382Q612 392 632 420Q650 455 655 490Q650 525 625 528Q612 515 598 518Q590 535 560 528Q520 500 512 450Q512 430 530 418Q530 395 530 375Z";
const ViewRight = () => (
  <g transform="translate(900 300) scale(.33333)" stroke="#000" strokeWidth="3">
    <PistonUnder x={208} y={286} flip /><PistonUnder x={346} y={353} flip /><PistonUnder x={487} y={271} flip />
    <path d="M262 372L298 362L328 480L296 500Z" fill="#1b1b1a" /><path d="M275 368L310 492M300 372L328 470" stroke="#555" strokeWidth="2" />
    <Extrude d="M152 620Q200 630 220 690Q225 735 205 745Q160 735 132 680Q125 640 152 620Z" dx={-30} dy={12} face="#42423f" side="#6c6c65" />
    <path d="M150 660L205 630L240 690L185 716Q150 705 150 660Z" fill="#6a6a63" /><path d="M165 658L215 640" stroke="#8d8d85" strokeWidth="8" />
    <Extrude d={ring} dx={-25} dy={12} face="#343433" side="#64645d" />
    <Extrude d={ring} dx={-25} dy={12} face="#30302e" side="#5c5c56" at={[66, -38]} />
    <path d="M310 490L345 475L375 490L365 520L330 530L322 570L355 620L345 640L310 600L300 560Z" fill="#4a4a45" /><path d="M325 500L330 540L355 600M345 480L330 520" fill="none" />
    <Extrude d={lobeRight} dx={-28} dy={14} face="#31312f" side="#5b5b55" at={[-138, 92]} />
    <Extrude d={lobeRight} dx={-26} dy={12} face="#343432" side="#585852" at={[-118, 74]} />
    <path d="M425 490L450 470L470 480L465 520L490 560L510 570L490 582L450 560L428 525Z" fill="#5e5e58" /><path d="M440 490L450 540L500 574" fill="none" />
    <path d="M450 420L480 400L510 410L512 440L480 450L465 480L452 470Z" fill="#30302d" />
    <Extrude d={lobeRight} dx={-28} dy={14} face="#2e2e2d" side="#52524d" at={[-62, 38]} />
    <Extrude d={lobeRight} dx={-28} dy={12} face="#343434" side="#4a4a46" />
    <ellipse cx="606" cy="428" rx="34" ry="48" transform="rotate(-25 606 428)" fill="#1a1a19" />
    <path d="M590 405L640 378L668 428L620 460Q588 440 590 405Z" fill="#252524" /><path d="M604 408L645 388" stroke="#555" strokeWidth="6" />
    <Extrude d={ring} dx={-20} dy={10} face="url(#faceB)" side="#2c2c2a" at={[418, -238]} />
    <PistonUnder x={626} y={45} flip />
    <path d="M682 132L716 122L756 262L712 272Z" fill="#0f0f0f" /><path d="M696 130L728 264M710 140L745 258" stroke="#555" strokeWidth="2" />
    <Extrude d="M770 254Q815 258 834 300Q845 350 820 370Q805 385 808 425Q790 440 765 430Q720 400 700 345Q690 290 705 270Q730 282 745 272Q755 256 770 254Z" dx={-26} dy={8} face="#353535" side="#20201f" />
    <ellipse cx="748" cy="348" rx="36" ry="46" transform="rotate(-25 748 348)" fill="#151515" />
    <path d="M730 325L765 305L795 345L770 380Q735 380 730 325Z" fill="#1e1e1e" /><ellipse cx="771" cy="341" rx="23" ry="32" transform="rotate(-25 771 341)" fill="#3b3b3b" />
    <path d="M190 590L215 580M200 640L225 625M230 695L255 680M270 620L295 610M350 545L375 532M380 610L405 595M430 580L450 570M490 480L515 468M505 510L535 498M620 400L640 392M660 450L680 440M690 400L710 392" strokeWidth="2" />
  </g>
);

const Grad = ({ id, v, stops }: { id: string; v?: boolean; stops: [number, string][] }) => (
  <linearGradient id={id} x1="0" y1="0" x2={v ? "0" : "1"} y2={v ? "1" : "0"}>
    {stops.map(([o, c]) => <stop key={o} offset={o} stopColor={c} />)}
  </linearGradient>
);

const cols = [507.5, 608.5, 709.5, 911.5, 1011.5, 1112.5];
const rowsY = [283.5, 379.5, 572.5, 669.5];
const SheetDrawing = () => (
  <Drawing width="860" height="662" viewBox="370 140 860 662">
    <defs>
      <Grad id="shell" stops={[[0, "#1a1a1a"], [0.2, "#333"], [0.35, "#555"], [0.5, "#2e2e2e"], [0.65, "#111"], [0.85, "#5a5a58"], [1, "#777773"]]} />
      <Grad id="shellFlip" stops={[[0, "#111"], [0.25, "#222"], [0.5, "#5a5a5a"], [0.7, "#151515"], [0.88, "#6c6c66"], [1, "#333"]]} />
      <Grad id="bore" stops={[[0, "#080808"], [0.15, "#444"], [0.3, "#0d0d0d"], [0.6, "#0a0a0a"], [0.8, "#3b3b38"], [1, "#151515"]]} />
      <Grad id="steel" stops={[[0, "#222"], [0.2, "#2a2a2a"], [0.32, "#686868"], [0.45, "#1c1c1c"], [0.6, "#151515"], [0.78, "#8a8a8a"], [0.92, "#6c6c6c"], [1, "#333"]]} />
      <Grad id="skirt" stops={[[0, "#2a2a2a"], [0.2, "#555"], [0.4, "#242424"], [0.6, "#1a1a1a"], [0.8, "#666"], [1, "#333"]]} />
      <Grad id="crownL" stops={[[0, "#3c3c39"], [0.6, "#5c5c57"], [1, "#4c4c48"]]} />
      <Grad id="crownD" stops={[[0, "#161616"], [1, "#3a3a38"]]} />
      <Grad id="rod" stops={[[0, "#444"], [0.5, "#7c7c7c"], [1, "#444"]]} />
      <Grad id="faceA" stops={[[0, "#2b2b2b"], [0.6, "#3d3d3d"], [1, "#2d2d2d"]]} />
      <Grad id="faceB" stops={[[0, "#222"], [0.5, "#3f3f3f"], [1, "#222"]]} />
      <Grad id="plate" stops={[[0, "#131313"], [0.45, "#161616"], [0.55, "#2a2a2a"], [0.75, "#141414"], [1, "#191919"]]} />
      <Grad id="web" v stops={[[0, "#111"], [0.18, "#151515"], [0.23, "#bbb"], [0.29, "#181818"], [0.7, "#0c0c0c"], [0.74, "#333"], [0.78, "#101010"], [1, "#0c0c0c"]]} />
      <Grad id="shaft" v stops={[[0, "#0c0c0c"], [0.35, "#151515"], [0.45, "#8a8a8a"], [0.53, "#202020"], [1, "#080808"]]} />
    </defs>
    <g stroke="#000" fill="none">
      <path d="M376.500 207V176.500H407M1193 176.500H1223.500V207M376.500 745V775.500H407M1193 775.500H1223.500V745" />
      <rect x="416.500" y="196.500" width="787" height="559" />
      {cols.map((x) => <path key={x} d={`M${x} 186V196M${x} 755V766`} />)}
      {rowsY.map((y) => <path key={y} d={`M406 ${y}H416M1203 ${y}H1214`} />)}
      <path d="M810.500 186V207M810.500 745V766M406 476.500H427M1193 476.500H1214" />
      <path d="M527 166.500H545" />
    </g>
    <g fontSize="7.500" textAnchor="middle" fill="#111" fontFamily="Liberation Sans, sans-serif">
      {[1, 2, 3, 4, 5, 6, 7, 8].map((n) => (
        <React.Fragment key={n}>
          {n > 1 && <text x={456 + (n - 1) * 101} y="195">{n}</text>}
          <text x={456 + (n - 1) * 101} y="764">{n}</text>
        </React.Fragment>
      ))}
      {["A", "B", "C", "D", "E", "F"].map((c, i) => (
        <React.Fragment key={c}>
          <text x="411" y={238 + i * 96.400}>{c}</text>
          <text x="1208" y={238 + i * 96.400}>{c}</text>
        </React.Fragment>
      ))}
    </g>
    <ViewPlan /><ViewFront /><ViewTopIso /><ViewUnder /><ViewRight />
  </Drawing>
);

/* ---------- taskbar and title icons ---------- */
const FusionLogo = ({ w, h }: { w: number; h: number }) => (
  <svg width={w} height={h} viewBox="0 0 22 24">
    <rect x="1" width="21" height="23" rx="2.500" fill="#ff6b00" /><path d="M0 3L4 0V24H2Q0 24 0 22Z" fill="#c24c00" />
    <path d="M0 16.500H22V22Q22 24 20 24H2Q0 24 0 22Z" fill="#8f3500" />
    <text x="8" y="13" fontSize="12" fontWeight="700" fontFamily="Roboto" fill="#fff">F</text>
    <text x="6" y="22.500" fontSize="5.500" fontWeight="700" fontFamily="Roboto" fill="#ffd9bd">FUS</text>
  </svg>
);

export default function App() {
  return (
    <>
      <Global />
      <Screen>
        <TitleBar>
          <FusionLogo w={14} h={17} />
          <WindowTitle>Autodesk Fusion (Education License)</WindowTitle>
          <WindowButtons>
            <svg viewBox="0 0 45 22"><path d="M18 11.500H29" stroke="#000" /></svg>
            <svg viewBox="0 0 45 22" fill="none" stroke="#000"><rect x="18.500" y="7.500" width="7" height="7" rx="1" /><path d="M20.500 5.500H26Q27.500 5.500 27.500 7V12.500" /></svg>
            <svg viewBox="0 0 45 22"><path d="M18 5.500L28 15.500M28 5.500L18 15.500" stroke="#000" /></svg>
          </WindowButtons>
        </TitleBar>

        <TabBar>
          <QuickCell $w={32}><svg width="14" height="14" viewBox="0 0 14 14" fill="#606060">{[0, 5, 10].map((x) => [0, 5, 10].map((y) => <rect key={x + "-" + y} x={x} y={y} width="4" height="4" />))}</svg></QuickCell>
          <QuickCell $w={45}>
            <svg width="14" height="16" viewBox="0 0 14 16"><path d="M0 0H9V5H14V16H0ZM10 0L14 4H10Z" fill="#5f5f5f" /></svg>
            <svg width="7" height="5" viewBox="0 0 7 5"><path d="M0 0H7L3.500 5Z" fill="#5f5f5f" /></svg>
          </QuickCell>
          <QuickCell><svg width="14" height="14" viewBox="0 0 14 14" fill="none" stroke="#8c8c8c" strokeWidth="1.600"><path d="M0.800 0.800H11L13.200 3V13.200H0.800ZM3.500 1V5.500H9.500V1M3 13V8.500H11V13" /></svg></QuickCell>
          <QuickCell><svg width="14" height="12" viewBox="0 0 14 12" fill="none" stroke="#8f8f8f" strokeWidth="1.600"><path d="M5 0.800L1 4.500L5 8.200M1 4.500H7Q12.500 4.500 12.500 12" /></svg></QuickCell>
          <QuickCell><svg width="14" height="12" viewBox="0 0 14 12" fill="none" stroke="#8f8f8f" strokeWidth="1.600"><path d="M9 0.800L13 4.500L9 8.200M13 4.500H7Q1.500 4.500 1.500 12" /></svg></QuickCell>
          <QuickCell><svg width="17" height="17" viewBox="0 0 24 24" fill="none" stroke="#6b6b6b" strokeWidth="2.600"><path d="M10 14a5 5 0 0 0 7.500.500l3.500-3.500a5 5 0 0 0-7.500-7.500l-2 2M14 10a5 5 0 0 0-7.500-.500l-3.500 3.500a5 5 0 0 0 7.500 7.500l2-2" /></svg></QuickCell>
          <QuickCell><svg width="15" height="16" viewBox="0 0 15 16"><path d="M5 0H11V4H15V11H5ZM12 0L15 3H12Z" fill="#5a5a5a" /><path d="M2.700 2V13.300H12M0.500 4V15.500H10" fill="none" stroke="#5a5a5a" strokeWidth="1.200" /></svg></QuickCell>
          <HomeTab><svg width="15" height="14" viewBox="0 0 15 14"><path d="M7.500 0L15 7H13V14H9V9H6V14H2V7H0L3 4V1H5V2.400Z" fill="#808080" /></svg></HomeTab>
          <DocTab>
            <svg width="16" height="14" viewBox="0 0 16 14" fill="none" stroke="#ff6f0f" strokeWidth="1.300"><path d="M9 12.500H0.700V0.700H15.300V8M3.500 8.500V4H7L8 5.300H11V8.500Z" /><rect x="11" y="9.500" width="4" height="3.500" fill="#ff9b57" /></svg>
            <span>ASSIGN SHEET 2 v1</span>
            <CloseTab><svg width="10" height="10" viewBox="0 0 10 10"><path d="M1 1L9 9M9 1L1 9" stroke="#777" strokeWidth="1.300" /></svg></CloseTab>
          </DocTab>
          <PlusTab><svg width="14" height="14" viewBox="0 0 14 14"><path d="M7 0V14M0 7H14" stroke="#777" strokeWidth="2.600" /></svg></PlusTab>
          <QuickCell $shift><svg width="16" height="16" viewBox="0 0 16 16" fill="none"><path d="M4 2.500Q8 -0.500 12 2M14.500 5Q16.500 12 10 14.500M6 14.500Q-0.500 12 1.500 5" stroke="#5f5f5f" strokeWidth="2" /><path d="M10 1.500V5L13 6M4 13L10 6" stroke="#5f5f5f" strokeWidth="3" /></svg></QuickCell>
          <QuickCell $shift><svg width="16" height="16" viewBox="0 0 16 16"><circle cx="8" cy="8" r="8" fill="#5f5f5f" /><circle cx="8" cy="8" r="6" fill="none" stroke="#ccc" /><path d="M8 4V8.500H11.500" fill="none" stroke="#ddd" strokeWidth="1.500" /></svg></QuickCell>
          <QuickCell $shift><svg width="15" height="16" viewBox="0 0 15 16"><path d="M7.500 0Q9 0 9 1.500Q12 2.500 12 6V9.500L14.500 12.500H0.500L3 9.500V6Q3 2.500 6 1.500Q6 0 7.500 0ZM5.500 13.500H9.500L7.500 16Z" fill="#5f5f5f" /></svg></QuickCell>
          <QuickCell $shift><svg width="16" height="16" viewBox="0 0 16 16"><circle cx="8" cy="8" r="8" fill="#5f5f5f" /><text x="8" y="12.500" textAnchor="middle" fontSize="13" fontWeight="700" fontFamily="Roboto" fill="#ddd">?</text></svg></QuickCell>
          <Avatar>JR</Avatar>
        </TabBar>

        <Ribbon>
          <RibbonTabs>
            <RibbonTab $active>DRAWING</RibbonTab>
            <RibbonTab>MANAGE</RibbonTab>
          </RibbonTabs>
          <Groups>
            {ribbonGroups.map(([name, w, tools, nudge]) => (
              <Group key={name} $w={w} $nudge={nudge}>
                <Tools>{tools}</Tools>
                <GroupLabel>{name}</GroupLabel>
              </Group>
            ))}
          </Groups>
        </Ribbon>

        <Workspace>
          <SideColumn>
            <PanelHeader>
              <PanelTitle>
                <svg width="10" height="6" viewBox="0 0 10 6"><path d="M5 0V6L0 3ZM10 0V6L5 3Z" fill="#222" /></svg>
                BROWSER
              </PanelTitle>
              <svg width="9" height="9" viewBox="0 0 9 9"><circle cx="4.500" cy="4.500" r="4.500" fill="#2b2b2b" /><path d="M2 4.500H7" stroke="#fff" /></svg>
            </PanelHeader>
            <Tree>
              {rows.map((r) => (
                <TreeRow key={r.text} $x={r.x}>
                  <ArrowCell $open={r.open}>{r.open ? <OpenArrow /> : <ClosedArrow />}</ArrowCell>
                  <TreeBox $w={r.w} $off={r.off}>
                    {r.icons}
                    <TreeText $ls={r.ls} $off={r.off}>{r.text}</TreeText>
                  </TreeBox>
                </TreeRow>
              ))}
            </Tree>
            <PanelHeader>
              <PanelTitle><Blank />COMMENTS</PanelTitle>
              <svg width="9" height="9" viewBox="0 0 9 9"><circle cx="4.500" cy="4.500" r="4.500" fill="#2b2b2b" /><path d="M2 4.500H7M4.500 2V7" stroke="#fff" /></svg>
            </PanelHeader>
          </SideColumn>

          <Sheet />
          <SheetDrawing />
          <TitleBlock>
            <BlockColumn>
              <BlockRow $h={20}>
                <Cell $w={48}><Tiny>Dept.</Tiny></Cell>
                <Cell><Tiny>Technical reference</Tiny></Cell>
              </BlockRow>
              <BlockRow $h={74} />
            </BlockColumn>
            <BlockColumn>
              <BlockRow $h={20}>
                <Cell><Tiny>Created by</Tiny><Signature><span>Janvi Raut</span><span>4/20/2024</span></Signature></Cell>
              </BlockRow>
              <BlockRow $h={21}><Cell><Redacted $w={34} /></Cell></BlockRow>
              <BlockRow $h={53}><Cell><Redacted $w={10} $up /><PartName>fusion assignment1</PartName></Cell></BlockRow>
            </BlockColumn>
            <BlockColumn>
              <BlockRow $h={20}><Cell><Tiny>Approved by</Tiny></Cell></BlockRow>
              <BlockRow $h={21}><Cell><Redacted $w={38} /></Cell></BlockRow>
              <BlockRow $h={34}><Cell><Redacted $w={22} $up /></Cell></BlockRow>
              <BlockRow $h={19}>
                <Cell $w={20}><Tiny>Rev.</Tiny></Cell>
                <Cell $w={73}><Tiny>Date of issue</Tiny></Cell>
                <Cell><Tiny>Sheet</Tiny><Signature $center>1/1</Signature></Cell>
              </BlockRow>
            </BlockColumn>
          </TitleBlock>
          <NavTools>
            <svg width="17" height="17" viewBox="0 0 17 17"><path d="M4 12L1 8.500Q2 7 4 8.500L5 9.500L3.500 3.500Q4.500 2 5.500 3.500L7 7.500L6.500 1.500Q7.500 0 8.500 1.500L9 7L10 2Q11.500 1 11.500 2.500L11 8L13.500 4.500Q15 4 14.500 6L12.500 12Q12 16 8.500 16Q5.500 15.500 4 12Z" fill="#fff" stroke="#333" /></svg>
            <svg width="17" height="17" viewBox="0 0 17 17"><rect x="0.500" y="0.500" width="15" height="15" fill="none" stroke="#777" strokeDasharray="2 1.500" /><circle cx="7" cy="6.500" r="5.500" fill="#d5e8ea" stroke="#556" strokeWidth="1.200" /><path d="M11 10.500L16 15.500" stroke="#333" strokeWidth="2.600" /></svg>
            <svg width="17" height="17" viewBox="0 0 17 17"><circle cx="7" cy="7" r="6" fill="#d5e8ea" stroke="#556" strokeWidth="1.200" /><rect x="4.500" y="4.500" width="5" height="5" fill="none" stroke="#445" /><path d="M11 11L16 16" stroke="#333" strokeWidth="2.600" /></svg>
          </NavTools>
        </Workspace>

        <SheetStrip>
          <Thumb>
            <svg width="38" height="28" viewBox="0 0 38 28">
              <rect x="0.500" y="1" width="36" height="24.500" fill="#fff" stroke="#000" strokeWidth="1.500" />
              <path d="M34.500 1V26M2.500 1V26" stroke="#000" strokeWidth="1.500" />
              <path d="M4 2L8 2L12 6L12 9L9 9L4 5ZM4 12H7L9 15L13 15V18L9 18L6 18L4 16ZM18.500 3H21.500V7L20.500 12L21.500 14L19 15L17.500 10ZM8 21L14 17.500L19 14L21 17L16 20L10 24L8 23ZM24 12L29 9L33 6V9L29 12L24 15Z" fill="#000" stroke="#000" strokeWidth=".6" />
              <path d="M20 25V21H35M25 21V25M30 21V25" stroke="#000" strokeWidth="1" fill="none" />
            </svg>
          </Thumb>
          <AddSheet><svg width="22" height="22" viewBox="0 0 22 22"><path d="M11 0V22M0 11H22" stroke="#4a4a4a" strokeWidth="4" /></svg></AddSheet>
        </SheetStrip>

        <Taskbar>
          <Weather>
            <svg width="26" height="30" viewBox="0 0 26 30">
              <path d="M0 22Q10 24 14 12L22 14Q23 28 11 29Q3 29 0 22Z" fill="url(#moon)" />
              <defs><Grad id="moon" v stops={[[0, "#f7b92e"], [1, "#ef7d22"]]} /></defs>
              <circle cx="18" cy="7.500" r="8" fill="#c42b1c" /><text x="18" y="11.500" textAnchor="middle" fontSize="11" fill="#fff" fontFamily="Noto Sans">1</text>
            </svg>
            <Lines><div>93°F</div><Muted>Clear</Muted></Lines>
          </Weather>
          <svg width="23" height="23" viewBox="0 0 23 23"><defs><Grad id="win" v stops={[[0, "#35b8f5"], [1, "#0a6fd1"]]} /></defs><path d="M0 0H11V11H0ZM12 0H23V11H12ZM0 12H11V23H0ZM12 12H23V23H12Z" fill="url(#win)" /></svg>
          <SearchBox>
            <svg width="15" height="16" viewBox="0 0 15 16"><circle cx="6.500" cy="6.500" r="5.500" fill="none" stroke="#222" strokeWidth="1.500" /><path d="M10.500 10.500L14.500 15" stroke="#222" strokeWidth="1.600" /></svg>
            <SearchText>Search</SearchText>
            <svg width="40" height="26" viewBox="0 0 40 26">
              <ellipse cx="20" cy="23.500" rx="19" ry="2" fill="#c9794c" />
              <path d="M7 2Q10 0 13 3Q14 9 18 9Q28 7 32 12Q36 18 31 20Q24 19 17 17Q12 13 11 7Z" fill="#2f2f66" /><path d="M20 10Q30 8 33 14Q35 19 31 20Z" fill="#5c3350" /><path d="M9 1L13 3L11 9L8 5Z" fill="#3aa0c8" /><path d="M10 8L12 12L9 11Z" fill="#cf3a34" /><path d="M4 4L9 3L8 5Z" fill="#564637" /><path d="M20 17L18 23M25 18L26 23" stroke="#8a5a45" strokeWidth="1.500" />
            </svg>
          </SearchBox>
          <AppSlot>
            <svg width="24" height="24" viewBox="0 0 24 24"><path d="M7 1H14Q17 1 17 5L13 15Q11 19 7 18Q0 18 1 12Q3 1 7 1Z" fill="#2aa5d8" /><path d="M14 1Q17 1 18 5L24 8Q24 18 18 19H7Q11 18 12 14Z" fill="#b05cd6" /><path d="M2 8L9 16L7 18Q0 18 1 12Z" fill="#6bc14a" /><path d="M18 5Q24 6 23 12L17 17Z" fill="#f0705f" /><rect x="7" y="15" width="17" height="9" rx="2" fill="#fbc616" /><text x="8" y="22.500" fontSize="7.500" fontWeight="700" fontFamily="Roboto" fill="#222">PRE</text></svg>
          </AppSlot>
          <AppSlot><svg width="24" height="24" viewBox="0 0 24 24"><rect x="6" y="1" width="18" height="16" rx="1" fill="#f7f7f7" /><rect x="0" y="7" width="18" height="15" rx="1" fill="#222" /><rect x="6" y="7" width="12" height="10" fill="#6d6d6d" /></svg></AppSlot>
          <AppSlot><svg width="24" height="24" viewBox="0 0 24 24"><circle cx="20" cy="6" r="3" fill="#5159bc" /><circle cx="14" cy="4.500" r="3.500" fill="#7b83eb" /><path d="M8 9H24V16Q23 21 19 21Q15 25 10 21Z" fill="#6067c9" /><rect x="0" y="6" width="14" height="13" rx="1" fill="#fff" /><text x="3.500" y="16.500" fontSize="11" fontWeight="700" fontFamily="Roboto" fill="#4b53bc">T</text></svg></AppSlot>
          <AppSlot><svg width="24" height="24" viewBox="0 0 24 24"><path d="M0 2Q0 1 1 1H9L12 4H0Z" fill="#c98a0c" /><path d="M0 4H22Q24 4 24 6V21Q24 23 22 23H2Q0 23 0 21Z" fill="#fdcb45" /><path d="M5 15H19V23H5Z" fill="#1679ca" /><path d="M8 19H16V23H8Z" fill="#0c5ea5" /></svg></AppSlot>
          <AppSlot><svg width="24" height="24" viewBox="0 0 24 24"><path d="M7 6V2H17V6" fill="none" stroke="#27a6de" strokeWidth="2" /><path d="M1 5H23V20Q23 23 20 23H4Q1 23 1 20Z" fill="#0d4f8e" /><path d="M7 9H11.500V13.500H7Z" fill="#f25022" /><path d="M12.500 9H17V13.500H12.500Z" fill="#7fba00" /><path d="M7 14.500H11.500V19H7Z" fill="#00a4ef" /><path d="M12.500 14.500H17V19H12.500Z" fill="#ffb900" /></svg></AppSlot>
          <AppSlot $dot><svg width="24" height="24" viewBox="0 0 24 24"><path d="M1 1H14V14H1Z" fill="#fff" stroke="#d6392b" strokeWidth="3" strokeDasharray="3 1.500" /><path d="M16 2V20M5 14H18" stroke="#8e959d" strokeWidth="2.500" /><circle cx="21" cy="14" r="2.500" fill="none" stroke="#1789d8" strokeWidth="2" /><circle cx="15" cy="21" r="2.500" fill="none" stroke="#1789d8" strokeWidth="2" /></svg></AppSlot>
          <AppSlot $active><FusionLogo w={22} h={25} /></AppSlot>
          <Tray>
            <svg width="11" height="7" viewBox="0 0 11 7"><path d="M0.500 6L5.500 1L10.500 6" fill="none" stroke="#222" strokeWidth="1.300" /></svg>
            <TraySlot $ml={20}><Lines $align="center"><div>ENG</div><div>IN</div></Lines></TraySlot>
            <TraySlot $ml={18}><svg width="17" height="16" viewBox="0 0 17 16" fill="none" stroke="#222" strokeWidth="1.200"><path d="M9 1.500H2Q0.600 1.500 0.600 3V12.500H12.500V9M3.500 15.500H10M6.500 12.500V15.500" /><rect x="11.500" y="1" width="4.500" height="4.500" rx="1" /><path d="M13.700 5.500V9" /></svg></TraySlot>
            <TraySlot $ml={7}><svg width="16" height="14" viewBox="0 0 16 14" fill="none" stroke="#222" strokeWidth="1.200"><path d="M0.600 5H3L6.500 1.500V12.500L3 9H0.600ZM8.500 4.500Q10 7 8.500 9.500M10.500 3Q13 7 10.500 11M12.500 1.500Q16.500 7 12.500 12.500" /></svg></TraySlot>
            <TraySlot $ml={17}><Lines $align="right"><div>10:16 PM</div><div>4/20/2024</div></Lines></TraySlot>
            <TraySlot $ml={9}><svg width="14" height="15" viewBox="0 0 14 15" fill="none" stroke="#222" strokeWidth="1.200"><path d="M7 0.700Q11.500 0.700 11.500 5.500V8.500L13 11.500H1L2.500 8.500V5.500Q2.500 0.700 7 0.700ZM5 12Q7 15.500 9 12" /></svg></TraySlot>
          </Tray>
        </Taskbar>
      </Screen>
    </>
  );
}
